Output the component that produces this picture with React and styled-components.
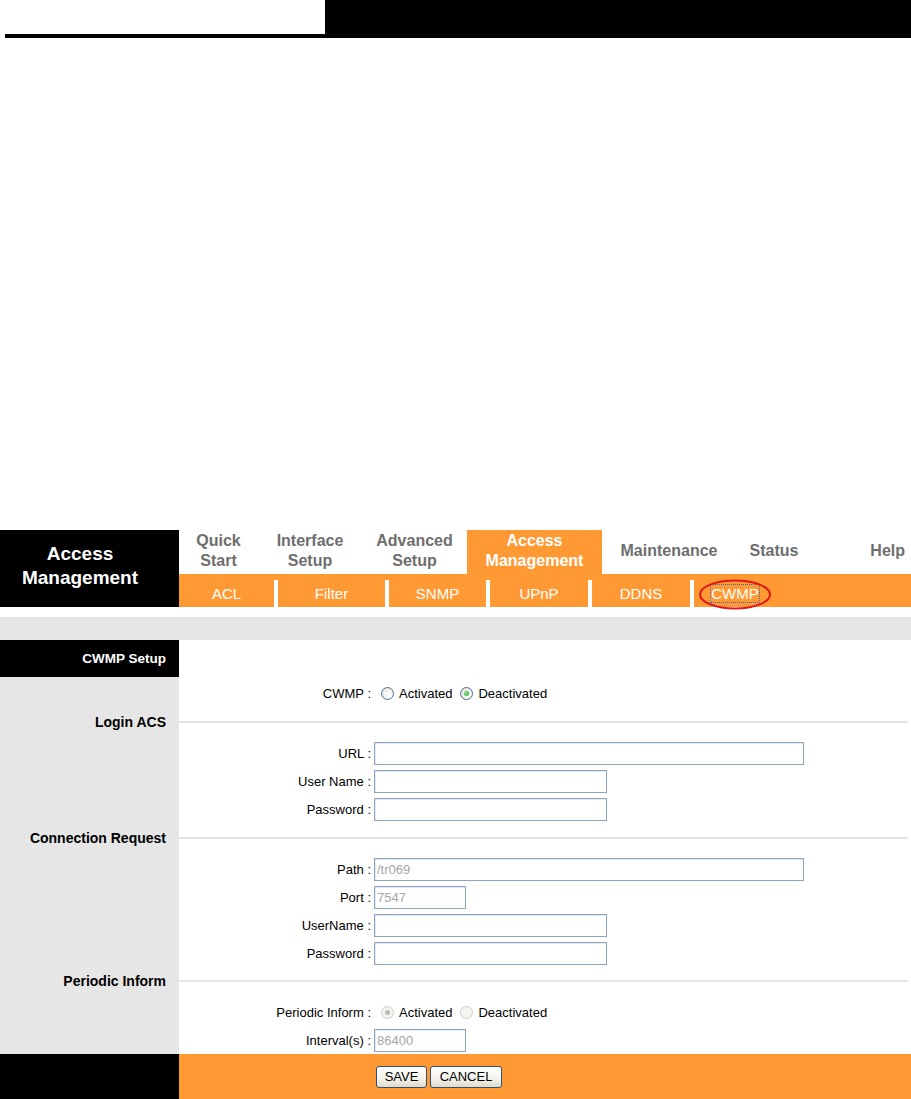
import styled, { createGlobalStyle } from 'styled-components';

const ORANGE = '#ff9933';
const GREY = '#e6e6e6';

const GlobalStyle = createGlobalStyle`
  body {
    margin: 0;
    background: #fff;
    font-family: "Liberation Sans", Arial, sans-serif;
  }
`;

const Page = styled.div`
  width: 911px;
`;

// 맨 위 제목 띠
const TopBar = styled.div`
  display: flex;
  height: 38px;
`;

const TopLeft = styled.div`
  width: 320px;
  height: 38px;
  margin-left: 5px;
  box-sizing: border-box;
  border-bottom: 4px solid #000;
`;

const TopRight = styled.div`
  flex: 1;
  background: #000;
`;

// 메뉴
const Nav = styled.div`
  display: flex;
  height: 77px;
  margin-top: 492px;
`;

const Brand = styled.div`
  width: 179px;
  flex: none;
  box-sizing: border-box;
  padding: 0 19px 6px 0;
  background: #000;
  color: #fff;
  font-weight: bold;
  font-size: 19px;
  line-height: 24px;
  display: flex;
  flex-direction: column;
  justify-content: center;
  text-align: center;
`;

const NavMain = styled.div`
  flex: 1;
  display: flex;
  flex-direction: column;
`;

const TabRow = styled.div`
  height: 44px;
  display: flex;
`;

const Tab = styled.div`
  width: ${(p) => p.$width}px;
  flex: ${(p) => (p.$grow ? 1 : 'none')};
  box-sizing: border-box;
  padding-right: ${(p) => (p.$right ? 6 : 0)}px;
  padding-bottom: 2px;
  display: flex;
  align-items: center;
  justify-content: ${(p) => (p.$right ? 'flex-end' : 'center')};
  text-align: center;
  font-weight: bold;
  font-size: 16px;
  line-height: 20px;
  color: ${(p) => (p.$active ? '#fff' : '#6e6e6e')};
  background: ${(p) => (p.$active ? ORANGE : 'transparent')};
`;

const SubRow = styled.div`
  height: 33px;
  display: flex;
  align-items: flex-end;
  background: ${ORANGE};
`;

const SubTab = styled.div`
  position: relative;
  width: ${(p) => p.$width}px;
  height: 27px;
  box-sizing: border-box;
  border-left: ${(p) => (p.$first ? 'none' : '4px solid #fff')};
  display: flex;
  align-items: center;
  justify-content: center;
  color: #fff;
  font-size: 15px;
`;

const Focused = styled.span`
  outline: 1px dotted #3c64b4;
  line-height: 17px;
`;

const Mark = styled.svg`
  position: absolute;
  left: 4px;
  top: -1px;
  pointer-events: none;
`;

const GapBar = styled.div`
  height: 23px;
  margin-top: 10px;
  background: ${GREY};
`;

// 본문
const Row = styled.div`
  display: flex;
  height: ${(p) => (p.$height ? `${p.$height}px` : 'auto')};
`;

const Side = styled.div`
  width: 179px;
  flex: none;
  box-sizing: border-box;
  padding-right: 13px;
  background: ${(p) => (p.$dark ? '#000' : GREY)};
  color: ${(p) => (p.$dark ? '#fff' : '#000')};
  font-weight: bold;
  font-size: ${(p) => (p.$dark ? 13.5 : 14)}px;
  text-align: right;
  display: flex;
  align-items: center;
  justify-content: flex-end;
`;

const Main = styled.div`
  flex: 1;
  background: #fff;
  display: flex;
  flex-direction: column;
  justify-content: center;
  padding: ${(p) => p.$pt || 0}px 0 ${(p) => p.$pb || 0}px;
`;

const Divider = styled.div`
  height: 2px;
  margin-right: 3px;
  background: #e4e4e4;
`;

const Field = styled.div`
  height: 28px;
  display: flex;
  align-items: center;
  font-size: 13px;
  color: #000;
`;

const Label = styled.div`
  width: 192px;
  flex: none;
  text-align: right;
  margin-right: 3px;
`;

const TextBox = styled.div`
  width: ${(p) => p.$width}px;
  height: 23px;
  box-sizing: border-box;
  border: 1px solid #8aa4c1;
  box-shadow: inset 1px 1px 0 #e6ebf1;
  padding: 0 2px;
  display: flex;
  align-items: center;
  color: #a6a6a6;
  font-size: 13px;
`;

const Choice = styled.label`
  display: flex;
  align-items: center;
  margin-right: 1px;
`;

const RadioDot = styled.span`
  width: 13px;
  height: 13px;
  margin: 0 5px 0 7px;
  box-sizing: border-box;
  border-radius: 50%;
  border: 1px solid ${(p) => (p.$disabled ? '#cfcdc2' : '#4f6f96')};
  background: ${(p) => (p.$disabled ? '#f4f4f0' : 'radial-gradient(circle at 65% 65%, #fff 0%, #f1f1ee 45%, #d6d6cf 100%)')};
  display: flex;
  align-items: center;
  justify-content: center;

  &::after {
    content: '';
    display: ${(p) => (p.$checked ? 'block' : 'none')};
    width: 5px;
    height: 5px;
    border-radius: 50%;
    background: ${(p) => (p.$disabled ? '#b9b9b4' : 'radial-gradient(circle at 40% 40%, #8ee58e, #1f9d1f)')};
  }
`;

const Footer = styled.div`
  display: flex;
  height: 45px;
`;

const FooterSide = styled.div`
  width: 179px;
  flex: none;
  background: #000;
`;

const FooterMain = styled.div`
  flex: 1;
  background: ${ORANGE};
  display: flex;
  align-items: center;
  gap: 3px;
  padding-left: 197px;
`;

const Button = styled.button`
  width: ${(p) => p.$width}px;
  height: 22px;
  padding: 0;
  border: 1px solid #2f4f78;
  border-radius: 3px;
  background: linear-gradient(#ffffff, #f3f2ea 60%, #dedbc9);
  font-family: "Liberation Sans", Arial, sans-serif;
  font-size: 13px;
  color: #000;
`;

const topTabs = [
  { label: ['Quick', 'Start'], width: 79 },
  { label: ['Interface', 'Setup'], width: 104 },
  { label: ['Advanced', 'Setup'], width: 105 },
  { label: ['Access', 'Management'], width: 135, active: true },
  { label: ['Maintenance'], width: 134 },
  { label: ['Status'], width: 76 },
  { label: ['Help'], grow: true, right: true },
];

const subTabs = [
  { label: 'ACL', width: 95 },
  { label: 'Filter', width: 111 },
  { label: 'SNMP', width: 101 },
  { label: 'UPnP', width: 102 },
  { label: 'DDNS', width: 102 },
  { label: 'CWMP', width: 86, focused: true },
];

const Radio = ({ text, checked, disabled }) => (
  <Choice>
    <RadioDot $checked={checked} $disabled={disabled} />
    {text}
  </Choice>
);

const Section = ({ title }) => (
  <Row $height={20}>
    <Side>{title}</Side>
    <Main>
      <Divider />
    </Main>
  </Row>
);

const Block = ({ pt, pb, children }) => (
  <Row>
    <Side />
    <Main $pt={pt} $pb={pb}>
      {children}
    </Main>
  </Row>
);

const Input = ({ label, width, value }) => (
  <Field>
    <Label>{label}</Label>
    <TextBox $width={width}>{value}</TextBox>
  </Field>
);

const App = () => {
  return (
    <Page>
      <GlobalStyle />
      <TopBar>
        <TopLeft />
        <TopRight />
      </TopBar>

      <Nav>
        <Brand>
          <span>Access</span>
          <span>Management</span>
        </Brand>
        <NavMain>
          <TabRow>
            {topTabs.map((tab) => (
              <Tab key={tab.label.join(' ')} $width={tab.width} $active={tab.active} $grow={tab.grow} $right={tab.right}>
                <span>
                  {tab.label.map((line, i) => (
                    <span key={line}>
                      {i > 0 && <br />}
                      {line}
                    </span>
                  ))}
                </span>
              </Tab>
            ))}
          </TabRow>
          <SubRow>
            {subTabs.map((tab, i) => (
              <SubTab key={tab.label} $width={tab.width} $first={i === 0}>
                {tab.focused ? (
                  <>
                    <Focused>{tab.label}</Focused>
                    <Mark width="74" height="31" viewBox="0 0 74 31">
                      <ellipse cx="37" cy="15.5" rx="35" ry="14" fill="none" stroke="#e2141b" strokeWidth="2" />
                    </Mark>
                  </>
                ) : (
                  tab.label
                )}
              </SubTab>
            ))}
          </SubRow>
        </NavMain>
      </Nav>

      <GapBar />

      <Row $height={37}>
        <Side $dark>CWMP Setup</Side>
        <Main />
      </Row>

      <Block pt={2} pb={5}>
        <Field>
          <Label>CWMP :</Label>
          <Radio text="Activated" />
          <Radio text="Deactivated" checked />
        </Field>
      </Block>

      <Section title="Login ACS" />
      <Block pt={7} pb={5}>
        <Input label="URL :" width={430} />
        <Input label="User Name :" width={233} />
        <Input label="Password :" width={233} />
      </Block>

      <Section title="Connection Request" />
      <Block pt={7} pb={4}>
        <Input label="Path :" width={430} value="/tr069" />
        <Input label="Port :" width={92} value="7547" />
        <Input label="UserName :" width={233} />
        <Input label="Password :" width={233} />
      </Block>

      <Section title="Periodic Inform" />
      <Block pt={7} pb={0}>
        <Field>
          <Label>Periodic Inform :</Label>
          <Radio text="Activated" checked disabled />
          <Radio text="Deactivated" disabled />
        </Field>
        <Input label="Interval(s) :" width={92} value="86400" />
      </Block>

      <Footer>
        <FooterSide />
        <FooterMain>
          <Button $width={51}>SAVE</Button>
          <Button $width={72}>CANCEL</Button>
        </FooterMain>
      </Footer>
    </Page>
  );
};

export default App;
